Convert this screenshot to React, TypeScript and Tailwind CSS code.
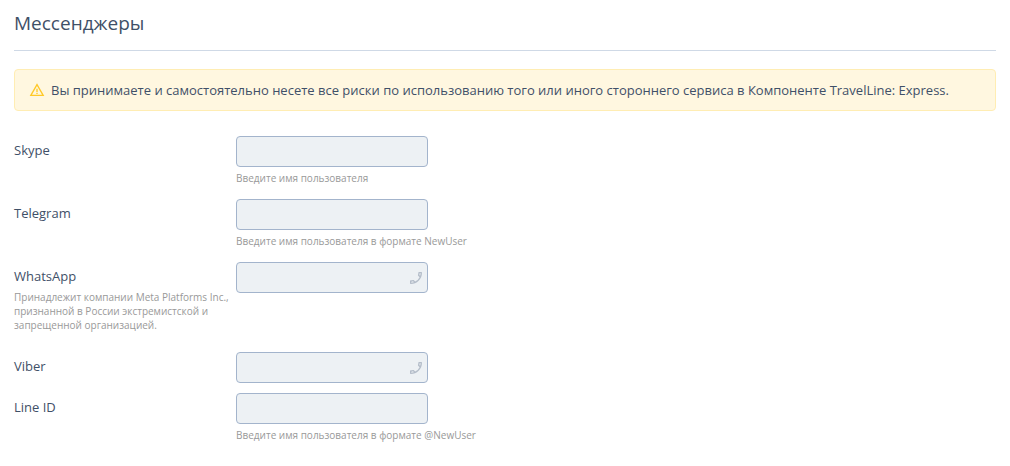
import { useState } from 'react'
import { MdOutlineCall, MdWarningAmber } from 'react-icons/md'

type Field = {
  id: string
  label: string
  note?: string
  hint?: string
  phone?: boolean
}

const fields: Field[] = [
  { id: 'skype', label: 'Skype', hint: 'Введите имя пользователя' },
  { id: 'telegram', label: 'Telegram', hint: 'Введите имя пользователя в формате NewUser' },
  {
    id: 'whatsapp',
    label: 'WhatsApp',
    note: 'Принадлежит компании Meta Platforms Inc., признанной в России экстремистской и запрещенной организацией.',
    phone: true,
  },
  { id: 'viber', label: 'Viber', phone: true },
  { id: 'line', label: 'Line ID', hint: 'Введите имя пользователя в формате @NewUser' },
]

function MessengerField({ field }: { field: Field }) {
  const [value, setValue] = useState('')
  const descriptionId = field.note || field.hint ? `${field.id}-description` : undefined

  return (
    <div className="flex items-start">
      <div className={`w-[222px] shrink-0 pt-1 ${field.note ? 'pb-2.5' : ''}`}>
        <label htmlFor={field.id} className="block text-[13px] leading-5">
          {field.label}
        </label>
        {field.note && (
          <p id={descriptionId} className="mt-1 text-[10px] leading-[14px] text-[#999]">
            {field.note}
          </p>
        )}
      </div>
      <div className={field.hint ? 'pb-1' : ''}>
        <div className="relative w-48">
          <input
            id={field.id}
            type={field.phone ? 'tel' : 'text'}
            value={value}
            onChange={(e) => setValue(e.target.value)}
            aria-describedby={descriptionId}
            className="block h-[31px] w-full rounded border border-[#a3b4cc] bg-[#edf1f4] px-2 text-[13px] outline-none"
          />
          {/* Handset faces left, towards the number */}
          {field.phone && (
            <MdOutlineCall
              className="pointer-events-none absolute inset-y-0 right-1 my-auto size-4 -scale-x-100 text-[#b4bdc9]"
              aria-hidden="true"
            />
          )}
        </div>
        {field.hint && (
          <p id={descriptionId} className="mt-1 text-[10px] leading-[14px] text-[#999]">
            {field.hint}
          </p>
        )}
      </div>
    </div>
  )
}

export default function App() {
  return (
    <main className="bg-white px-3.5 pt-2 pb-5 font-['Open_Sans','Noto_Sans',sans-serif] text-[#3f5068]">
      <h1 className="border-b border-[#cfd9e6] pb-3 text-[19px] leading-[30px]">Мессенджеры</h1>

      <div
        role="note"
        className="mt-[18px] flex items-center gap-1.5 rounded border border-[#ffedb3] bg-[#fff7e0] px-3.5 py-2.5 text-[13px] leading-5"
      >
        <MdWarningAmber className="size-4 shrink-0 text-[#ffc928]" aria-hidden="true" />
        <p>
          Вы принимаете и самостоятельно несете все риски по использованию того или иного стороннего сервиса в
          Компоненте TravelLine: Express.
        </p>
      </div>

      <form className="mt-[25px] flex flex-col gap-2.5">
        {fields.map((field) => (
          <MessengerField key={field.id} field={field} />
        ))}
      </form>
    </main>
  )
}
